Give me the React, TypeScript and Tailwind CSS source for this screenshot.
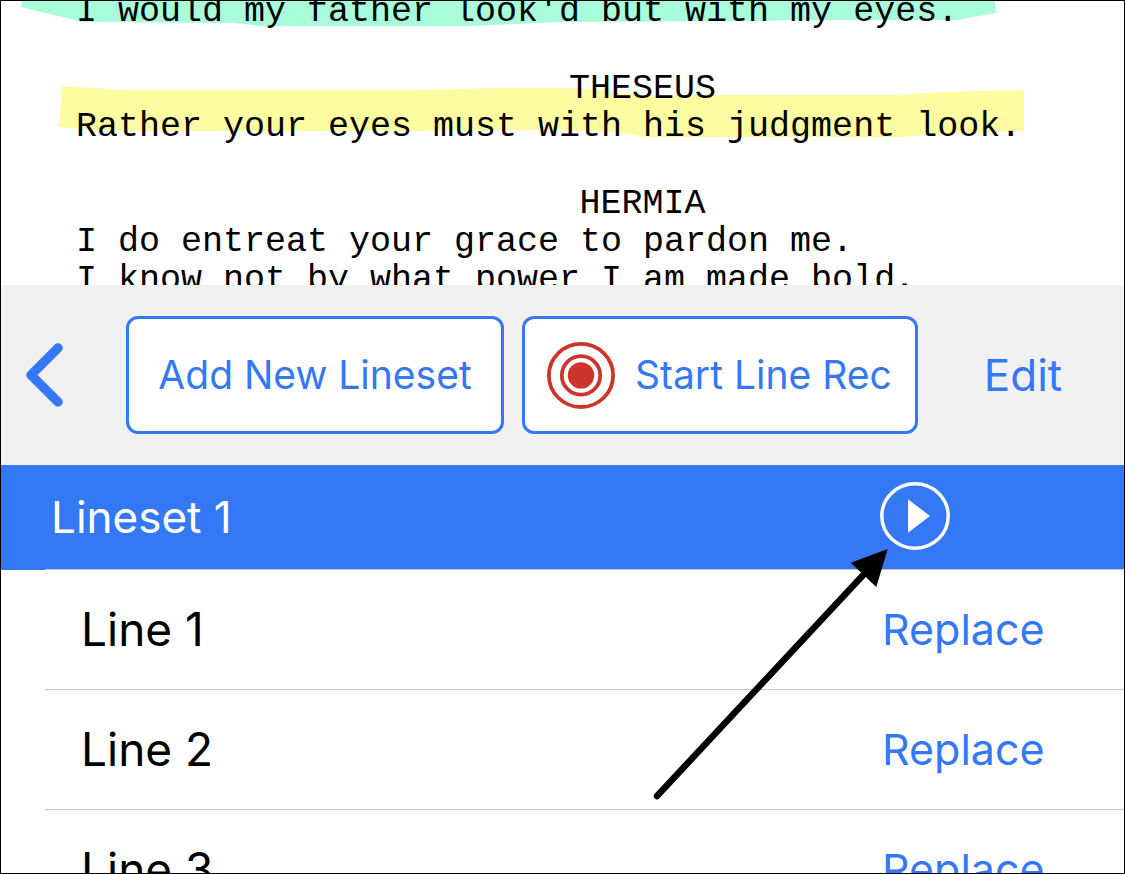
interface ScriptBlock {
    id: number;
    speaker?: string;
    lines: string[];
}

const scriptBlocks: ScriptBlock[] = [
    { id: 1, lines: ["I would my father look'd but with my eyes."] },
    { id: 2, speaker: "THESEUS", lines: ["Rather your eyes must with his judgment look."] },
    {
        id: 3,
        speaker: "HERMIA",
        lines: ["I do entreat your grace to pardon me.", "I know not by what power I am made bold,"],
    },
];

const recordedLines = [
    { id: 1, name: "Line 1" },
    { id: 2, name: "Line 2" },
    { id: 3, name: "Line 3" },
];

const ChevronIcon = () => (
    <svg width="38" height="64" viewBox="0 0 38 64" fill="none" aria-hidden="true">
        <path d="M33 5 6 32l27 27" stroke="#3478f6" strokeWidth="9.5" strokeLinecap="round" strokeLinejoin="round" />
    </svg>
);

const RecordIcon = () => (
    <svg width="68" height="68" viewBox="0 0 68 68" fill="none" aria-hidden="true">
        <ellipse cx="34" cy="34.4" rx="32.1" ry="31.6" stroke="#cc352c" strokeWidth="3.8" />
        <circle cx="34" cy="34.4" r="19.2" stroke="#cc352c" strokeWidth="3.8" />
        <circle cx="34" cy="34.4" r="13.2" fill="#cc352c" />
    </svg>
);

const PlayIcon = () => (
    <svg width="70" height="70" viewBox="0 0 70 70" fill="none" aria-hidden="true">
        <ellipse cx="35" cy="34" rx="33.2" ry="32.2" stroke="white" strokeWidth="3.4" />
        <path d="M28 17.3 50 34 28 50.7Z" fill="white" />
    </svg>
);

// marker strokes behind the script
const Highlights = () => (
    <svg className="absolute top-0 left-0" width="1123" height="284" viewBox="1 1 1123 284" aria-hidden="true">
        <path d="M22 1 21 7 83 22 235 23 260 26H471L562 22 767 21 788 20H957L996 13 995 1Z" fill="#a9fcda" />
        <path
            d="M62 86 125 90H415L500 88H562L590 89 640 95H896L939 92 1024 90V131L939 134 900 137H645L618 132 562 130 416 131H108L59 127Z"
            fill="#fdfca0"
        />
    </svg>
);

const Script = () => {
    return (
        <section className="relative h-[284px] shrink-0 overflow-hidden">
            <Highlights />
            <div className="relative -mt-2 flex flex-col gap-[39px] font-['Liberation_Mono',monospace] text-[35px] leading-[38px] whitespace-pre">
                {scriptBlocks.map((block) => (
                    <div key={block.id}>
                        {block.speaker && <p className="pl-40 text-center">{block.speaker}</p>}
                        {block.lines.map((line) => (
                            <p key={line} className="pl-[75px]">{line}</p>
                        ))}
                    </div>
                ))}
            </div>
        </section>
    );
};

const Toolbar = () => {
    return (
        <div className="flex h-[180px] shrink-0 items-center bg-[#f1f1f1] pl-6 text-[#3478f6]">
            <button type="button" aria-label="Back" className="shrink-0">
                <ChevronIcon />
            </button>
            <div className="ml-[63px] flex shrink-0 gap-[18px] text-[39px] whitespace-nowrap">
                <button type="button" className="h-[118px] w-[378px] rounded-xl border-3 border-[#3478f6] bg-white">
                    Add New Lineset
                </button>
                <button
                    type="button"
                    className="flex h-[118px] w-[396px] items-center gap-5 rounded-xl border-3 border-[#3478f6] bg-white pl-[22px]"
                >
                    <RecordIcon />
                    Start Line Rec
                </button>
            </div>
            <button type="button" className="grow pl-1 text-[44px]">Edit</button>
        </div>
    );
};

const LinesetHeader = () => {
    return (
        <div className="shrink-0 bg-[#3478f6] pl-11">
            <div className="flex h-[105px] items-center border-b border-[#c6c6c8]">
                <h2 className="grow pl-1.5 text-[44px] text-white">Lineset 1</h2>
                <button type="button" aria-label="Play Lineset 1" className="w-[244px]">
                    <PlayIcon />
                </button>
            </div>
        </div>
    );
};

const LineList = () => {
    return (
        <ul className="pl-11">
            {recordedLines.map((line) => (
                <li key={line.id} className="flex h-[120px] items-center border-b border-[#c6c6c8]">
                    <span className="grow pl-9 text-[46px]">{line.name}</span>
                    <button type="button" className="w-[244px] pl-0.5 text-left text-[43px] text-[#3478f6]">
                        Replace
                    </button>
                </li>
            ))}
        </ul>
    );
};

// arrow that points at the play button
const Pointer = () => (
    <svg className="pointer-events-none absolute top-[547px] right-[235px]" width="236" height="254" viewBox="653 548 236 254" aria-hidden="true">
        <path d="M657 796 866 572" stroke="black" strokeWidth="6.5" strokeLinecap="round" />
        <path d="M887.7 549 850.7 562.7 876.3 587Z" fill="black" />
    </svg>
);

export default function App() {
    return (
        <main className="relative flex h-screen flex-col overflow-hidden border border-black bg-white font-[Inter,sans-serif] text-black">
            <Script />
            <Toolbar />
            <LinesetHeader />
            <LineList />
            <Pointer />
        </main>
    );
}
